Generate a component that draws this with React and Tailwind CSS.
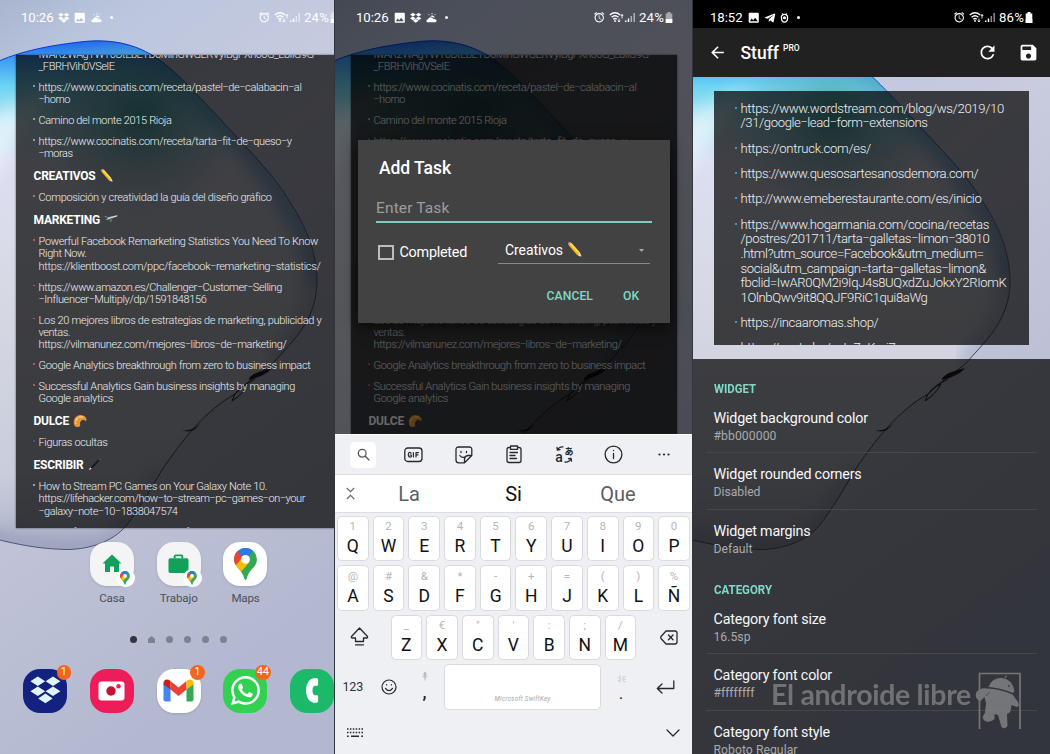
import React, { useLayoutEffect, useRef, useState } from "react";
import { MdAlarm, MdImage, MdRefresh, MdSave, MdArrowBack } from "react-icons/md";
import { FaDropbox, FaTelegramPlane, FaWhatsapp } from "react-icons/fa";

/* One line of text whose tracking (or horizontal scale) is set to fill a given width. */
function Fit({ w, scale = false, className = "", children }) {
  const ref = useRef(null);
  const [style, setStyle] = useState({});
  useLayoutEffect(() => {
    const natural = ref.current.getBoundingClientRect().width;
    if (scale) setStyle({ transform: `scaleX(${w / natural})` });
    else setStyle({ letterSpacing: `${(w - natural) / String(children).length}px` });
  }, []);
  const parts = String(children).split("–");
  return (
    <span ref={ref} style={style} className={`inline-block origin-left whitespace-pre ${className}`}>
      {parts.map((p, i) => (
        <React.Fragment key={i}>
          {i > 0 && <span className="align-[0.06em] text-[0.84em] leading-none">–</span>}
          {p}
        </React.Fragment>
      ))}
    </span>
  );
}

function Wallpaper() {
  const blob =
    "M-30 78 C0 54 45 46 80 42 C112 38 135 45 152 55 C175 69 200 98 222 121 C248 150 272 172 290 202 C308 230 317 255 317 282 C316 318 298 336 272 364 C258 376 246 382 235 394 C206 410 182 440 162 470 C150 490 140 508 126 526 C112 542 90 549 68 549.500 C40 549 15 545 -30 532 Z";
  return (
    <svg className="absolute left-0 top-0" width="358" height="754" viewBox="0 0 358 754" preserveAspectRatio="none">
      <defs>
        <linearGradient id="sky" x1="0" y1="0" x2="0.35" y2="1">
          <stop offset="0" stopColor="#a9b4cf" />
          <stop offset="0.12" stopColor="#bbc6de" />
          <stop offset="0.4" stopColor="#c9cbde" />
          <stop offset="0.75" stopColor="#bcc0d5" />
          <stop offset="1" stopColor="#b2b8d0" />
        </linearGradient>
        <linearGradient id="glass" x1="0" y1="40" x2="0" y2="550" gradientUnits="userSpaceOnUse">
          <stop offset="0" stopColor="#1f62e6" />
          <stop offset="0.035" stopColor="#3a9af2" />
          <stop offset="0.09" stopColor="#6cd4f2" />
          <stop offset="0.17" stopColor="#b8e4f2" />
          <stop offset="0.24" stopColor="#dddff2" />
          <stop offset="0.5" stopColor="#d6d9e3" />
          <stop offset="0.85" stopColor="#c9cddc" />
          <stop offset="1" stopColor="#adb3ca" />
        </linearGradient>
        <radialGradient id="teal" cx="140" cy="118" r="100" gradientUnits="userSpaceOnUse">
          <stop offset="0" stopColor="#3a9c98" stopOpacity="0.85" />
          <stop offset="0.5" stopColor="#5fb0b8" stopOpacity="0.45" />
          <stop offset="1" stopColor="#5fb0c0" stopOpacity="0" />
        </radialGradient>
        <linearGradient id="rim" x1="0" y1="40" x2="0" y2="550" gradientUnits="userSpaceOnUse">
          <stop offset="0" stopColor="#0b2fd8" />
          <stop offset="0.1" stopColor="#1b57b8" />
          <stop offset="0.4" stopColor="#5a6480" />
          <stop offset="0.7" stopColor="#33363f" />
          <stop offset="1" stopColor="#4b5478" />
        </linearGradient>
        <filter id="soft" x="-20%" y="-20%" width="140%" height="140%">
          <feGaussianBlur stdDeviation="9" />
        </filter>
        <clipPath id="inside">
          <path d={blob} />
        </clipPath>
      </defs>
      <rect width="358" height="754" fill="url(#sky)" />
      <path d={blob} fill="url(#glass)" />
      <g clipPath="url(#inside)">
        <path d="M152 55 C175 69 200 98 222 121 C272 172 317 235 317 282" fill="none" stroke="#2f78b8" strokeWidth="18" opacity="0.55" filter="url(#soft)" />
        <circle cx="140" cy="130" r="110" fill="url(#teal)" />
        <path d="M-20 120 L90 74 L60 84 L-20 190 Z" fill="#f2fbff" opacity="0.6" filter="url(#soft)" />
        <path d="M317 262 C316 318 298 336 272 364" fill="none" stroke="#6a70a8" strokeWidth="16" opacity="0.4" filter="url(#soft)" />
        <path d="M162 470 C140 508 126 526 112 540 C90 549 40 549 -20 535" fill="none" stroke="#666e90" strokeWidth="10" opacity="0.5" filter="url(#soft)" />
      </g>
      <path d={blob} fill="none" stroke="url(#rim)" strokeWidth="1" />
      <path d="M272 368 Q260 371 254 374 Q248 378 249 380 Q261 377 268 372 Z" fill="#14161a" />
      <path d="M248 384 Q236 388 232 401 Q243 394 248 384 M255 379 Q244 384 236 393" fill="none" stroke="#14161a" strokeWidth="1" />
      <path d="M181 430 Q191 432 200 424 Q194 432 187 431.500 Z" fill="#202329" />
    </svg>
  );
}

function Pencil({ size = 14 }) {
  return (
    <svg width={size} height={size} viewBox="0 0 14 14">
      <path d="M1.300 2.600 L3.600 .6 L11.300 9.200 L8.800 11.300 Z" fill="#f5b81f" />
      <path d="M2.400 1.700 L3.600 .6 L11.300 9.200 L10.300 10 Z" fill="#ffd95a" />
      <path d="M1.300 2.600 L3.600 .6 L2.600 .1 Q1 .3 .8 1.700 Z" fill="#f08aa0" />
      <path d="M8.800 11.300 L11.300 9.200 L13.200 13.300 Z" fill="#f3d9ae" />
      <path d="M11.900 12.500 L12.600 12 L13.200 13.300 Z" fill="#222" />
    </svg>
  );
}
function Airplane() {
  return (
    <svg width="14" height="11" viewBox="0 0 14 11">
      <path d="M3 4.800 L5.500 3 L13 1.200 Q14 1.400 13.200 2.400 L6 4.800 L3.500 5.800 Z" fill="#cfd9df" />
      <path d="M5.500 4.800 L8.500 3.800 L7.500 8 L6 8.500 Z" fill="#5b6b76" />
      <path d="M4.500 3.800 L.5 3 L.8 2.200 L5.500 3.200 Z" fill="#8fa3b0" />
      <path d="M1 5.200 L3.500 5 L3.300 5.800 Z" fill="#b9c7cf" />
    </svg>
  );
}
function Croissant() {
  return (
    <svg width="14" height="14" viewBox="0 0 14 14">
      <path d="M1.500 11.500 Q-.8 5.500 4 2 Q8.500 -.6 12.500 3 Q14 5 13 7.500 Q11 4.800 8.500 6.500 Q6.200 8 7.300 11 Q7 13.500 4.500 13 Q2.500 13 1.500 11.500Z" fill="#e9973a" />
      <path d="M3 10 Q1.500 6 5.500 3.500 Q8 2 10.500 3.400" fill="none" stroke="#f8c878" strokeWidth="1.600" />
      <path d="M4.500 2.500 L6.500 5.500 M1.200 7.500 L4.500 8.500" stroke="#c8752c" strokeWidth=".5" />
    </svg>
  );
}
function Pen() {
  return (
    <svg width="13" height="13" viewBox="0 0 13 13">
      <path d="M2.500 9.500 L10.500 1.200 Q12 .6 12 2 L4 10.800 Z" fill="#15171a" />
      <path d="M11 .8 L12.200 1.900" stroke="#8b9299" strokeWidth=".8" />
      <path d="M.8 12.200 L2.200 9.600 L3.600 10.800 Z" fill="#e4e8ea" />
    </svg>
  );
}

const emojis = { pencil: <Pencil />, plane: <Airplane />, croissant: <Croissant />, pen: <Pen /> };

const tasks = [
  { c: "bg-transparent", l: [["IwAR2WAgYWY6DtEbETD6MihGWGERVyIBgPXh06G_E8IlG9G", 275], ["_FBRHVih0VSelE", 76]] },
  { c: "bg-[#7d9aa0]", l: [["https://www.cocinatis.com/receta/pastel–de–calabacin–al", 263], ["–horno", 31.5]] },
  { c: "bg-[#8aa39c]", l: [["Camino del monte 2015 Rioja", 133]] },
  { c: "bg-[#8a9ba3]", l: [["https://www.cocinatis.com/receta/tarta–fit–de–queso–y", 253], ["–moras", 34]] },
  { h: "CREATIVOS", w: 62, e: "pencil" },
  { c: "bg-[#9a8352]", l: [["Composición y creatividad la guía del diseño gráfico", 233]] },
  { h: "MARKETING", w: 66.500, e: "plane" },
  { c: "bg-[#c0505c]", l: [["Powerful Facebook Remarketing Statistics You Need To Know", 279.5], ["Right Now.", 48], ["https://klientboost.com/ppc/facebook–remarketing–statistics/", 282]] },
  { c: "bg-[#c0505c]", l: [["https://www.amazon.es/Challenger–Customer–Selling", 243.5], ["–Influencer–Multiply/dp/1591848156", 168]] },
  { c: "bg-[#c0505c]", l: [["Los 20 mejores libros de estrategias de marketing, publicidad y", 283], ["ventas.", 31.5], ["https://vilmanunez.com/mejores–libros–de–marketing/", 248]] },
  { c: "bg-[#c0505c]", l: [["Google Analytics breakthrough from zero to business impact", 272]] },
  { c: "bg-[#c0505c]", l: [["Successful Analytics Gain business insights by managing", 256.5], ["Google analytics", 74.5]] },
  { h: "DULCE", w: 35.500, e: "croissant" },
  { c: "bg-[#4a4ca0]", l: [["Figuras ocultas", 69]] },
  { h: "ESCRIBIR", w: 50, e: "pen" },
  { c: "bg-[#9aa0b8]", l: [["How to Stream PC Games on Your Galaxy Note 10.", 228.5], ["https://lifehacker.com/how–to–stream–pc–games–on–your", 266.5], ["–galaxy–note–10–1838047574", 139]] },
  { c: "bg-transparent", l: [["https://lifehacker.com/your–xbox–files–to", 178]] },
];

/* `behindDialog` leaves out the rows that the open dialog and the keyboard cover. */
function TaskWidget({ behindDialog = false }) {
  const list = behindDialog ? tasks.slice(0, 13) : tasks;
  return (
    <div className="relative ml-4 mt-[19px] h-[473px] w-[326px] shrink-0 overflow-hidden bg-[#050606]/[.735] shadow-[0_0_2px_rgba(0,0,0,.6)]">
      <div className="-mt-[12.5px]">
        {list.map((t, i) => {
          if (behindDialog && i === 4) return <div key={i} className="h-[145.6px]" />;
          if (behindDialog && i > 4 && i < 9) return null;
          return t.h ? (
            <div key={i} className="flex h-[23px] items-center gap-1 pl-[17.5px] pt-[2.5px]">
              <Fit w={t.w} className="text-[12px] font-bold leading-none text-white">{t.h}</Fit>
              {emojis[t.e]}
            </div>
          ) : (
            <div key={i} className="flex py-[4.4px] pl-[17px]">
              <span className={`mr-[4px] mt-[5px] h-[1.5px] w-[1.5px] shrink-0 ${t.c}`} />
              <div className="flex flex-col">
                {t.l.map(([s, w]) => (
                  <div key={s} className="h-[12.2px] leading-[12.2px]">
                    <Fit w={w} className="text-[11px] font-light text-[#eeeff1]">{s}</Fit>
                  </div>
                ))}
              </div>
            </div>
          );
        })}
      </div>
    </div>
  );
}

function WifiSignal() {
  return (
    <svg width="27" height="12" viewBox="0 0 27 12" fill="none" stroke="currentColor">
      <path d="M.8 4 Q6 -.6 11.200 4 M2.600 6.200 Q6 3.200 9.400 6.200 M4.300 8.200 Q6 6.800 7.700 8.200" strokeWidth="1.300" />
      <circle cx="6" cy="10" r=".9" fill="currentColor" stroke="none" />
      <path d="M10 11 V7.500 M8.800 9.500 L10 11 L11.200 9.500 M13 3.500 V7.500 M11.800 5 L13 3.500 L14.200 5" strokeWidth=".9" />
      <path d="M16.700 11 V9.500 M19.500 11 V7.500" strokeWidth="1.500" />
      <path d="M22.300 11 V5 M25.200 11 V2" strokeWidth="1.500" opacity=".55" />
    </svg>
  );
}
function Weather() {
  return (
    <svg width="11" height="11" viewBox="0 0 11 11" fill="currentColor">
      <path d="M1 10.200 Q-.4 8 2 7.300 Q3.200 4.600 5.800 5.600 Q7 6 7.300 7 Q10.500 6.400 10.600 8.800 Q10.500 10 9.500 10.200 Z" />
      <path d="M4.200 4.500 Q6 2.700 8 4.300 Q8.700 5 8.500 6 Q6.500 4.200 4.200 4.500Z" />
      <path d="M6 1 V2.300 M2.600 2.200 L3.500 3.200 M9.300 2.200 L8.500 3.100" stroke="currentColor" strokeWidth=".9" />
    </svg>
  );
}
function Bug() {
  return (
    <svg width="9" height="11" viewBox="0 0 9 11" fill="none" stroke="currentColor" strokeWidth="1.300">
      <path d="M2.200 1.500 L3 2.500 M6.800 1.500 L6 2.500 M1.500 4 Q4.500 .8 7.500 4 V7 Q7 10.200 4.500 10.200 Q2 10.200 1.500 7 Z" />
      <circle cx="4.500" cy="5.800" r=".9" fill="currentColor" />
    </svg>
  );
}

function StatusBar({ time, icons, pct, level, pl = "pl-[21px]", right = "pl-[76px]" }) {
  return (
    <div className="relative flex h-[35px] shrink-0 items-center text-white">
      <div className={`flex w-[182px] items-center ${pl}`}>
        <Fit w={32.500} className="text-[13.2px] leading-none">{time}</Fit>
        <div className="ml-[4px] flex items-center gap-[4px]">{icons}</div>
        <span className="ml-[8px] h-[3px] w-[3px] rounded-full bg-white" />
      </div>
      <div className={`flex items-center ${right}`}>
        <MdAlarm size={12.5} className="shrink-0" />
        <span className="ml-[3px] shrink-0"><WifiSignal /></span>
        <Fit w={25} className="ml-[3.5px] text-[13.2px] leading-none">{pct}</Fit>
        <svg className="ml-px shrink-0" width="8" height="11" viewBox="0 0 8 11" fill="#fff">
          <path d="M2.500 0 H5.500 V1.500 H7.300 V11 H.7 V1.500 H2.500 Z" opacity={level < 50 ? 0.5 : 1} />
          <path d="M.7 7 H7.300 V11 H.7 Z" />
        </svg>
      </div>
    </div>
  );
}

function Pin({ w, h }) {
  return (
    <svg width={w} height={h} viewBox="0 0 24 34">
      <defs>
        <clipPath id="pinshape">
          <path d="M12 0 A12 12 0 0 1 24 12 C24 20 15.500 22 13.300 32 Q12 35 10.700 32 C8.500 22 0 20 0 12 A12 12 0 0 1 12 0 Z" />
        </clipPath>
      </defs>
      <g clipPath="url(#pinshape)">
        <rect width="24" height="34" fill="#34a853" />
        <path d="M0 18 L8 9 L16 15 L5.500 27 Z" fill="#fbbc04" />
        <path d="M-2 -2 L5 2.500 L10 8 L2 18 L-2 18 Z" fill="#ea4335" />
        <path d="M3.500 3.800 L12 12 L21 2 L12 -3 Z" fill="#2f78e8" />
      </g>
      <circle cx="12" cy="12" r="4.600" fill="#fff" />
    </svg>
  );
}

const tile = "relative flex h-11 w-11 items-center justify-center rounded-[17px]";
function Badge({ children }) {
  return (
    <span className="absolute -right-[4px] -top-[3.5px] flex h-[14.5px] min-w-[14.5px] items-center justify-center rounded-full bg-[#f2661f] px-[2.5px] text-[10.5px] leading-none text-white">
      {children}
    </span>
  );
}

function HomeShortcuts() {
  const mini = (
    <span className="absolute -bottom-[1px] -right-[1px] flex h-[18px] w-[19px] items-center justify-center rounded-full bg-white">
      <Pin w={10} h={14} />
    </span>
  );
  const items = [
    ["Casa", 25.500, <div key="a" className={`${tile} bg-[#f4f4f4] shadow-sm`}>
      <svg className="-mt-[1px]" width="20" height="19" viewBox="0 0 20 19"><path d="M10 .5 L19.500 9.500 H17 V18 H12 V12.500 H8 V18 H3 V9.500 H.5 Z" fill="#12a05a" /></svg>{mini}</div>],
    ["Trabajo", 38, <div key="b" className={`${tile} bg-[#f4f4f4] shadow-sm`}>
      <svg className="-mt-[1px]" width="21" height="20" viewBox="0 0 22 20"><path d="M7 4 V1.800 Q7 1 8 1 H14 Q15 1 15 1.800 V4" fill="none" stroke="#12a05a" strokeWidth="2" /><rect x=".5" y="4" width="21" height="15.500" rx="1.800" fill="#12a05a" /></svg>{mini}</div>],
    ["Maps", 28, <div key="c" className={`${tile} bg-white shadow-sm`}><Pin w={23} h={32.5} /></div>],
  ];
  return (
    <div className="relative ml-[78.5px] mt-[14px] flex">
      {items.map(([name, w, icon]) => (
        <div key={name} className="flex w-[66.8px] flex-col items-center">
          {icon}
          <Fit w={w} className="mt-[5.5px] text-[11.6px] leading-[13px] text-[#4c4f5a]">{name}</Fit>
        </div>
      ))}
    </div>
  );
}

function Dock() {
  return (
    <div className="relative ml-[23px] mt-[26px] flex gap-[22.8px]">
      <div className={`${tile} shrink-0 bg-[#12227e]`}>
        <svg width="33" height="29" viewBox="0 0 33 29" fill="#dff4fb">
          <path d="M8.800 .5 L16.200 5.200 L8.800 9.900 L1.400 5.200 Z M24 .5 L31.400 5.200 L24 9.900 L16.600 5.200 Z M8.800 10.600 L16.200 15.300 L8.800 20 L1.400 15.300 Z M24 10.600 L31.400 15.300 L24 20 L16.600 15.300 Z M16.400 17.600 L23.600 22.400 L16.400 27.200 L9.200 22.400 Z" />
        </svg>
        <Badge>1</Badge>
      </div>
      <div className={`${tile} shrink-0 bg-[#ec1d59]`}>
        <svg width="27" height="20" viewBox="0 0 27 20"><rect x=".5" y=".5" width="26" height="19" rx="3" fill="#fff" /><circle cx="13" cy="10" r="4.700" fill="#cb1033" /><circle cx="20.500" cy="5.300" r="2.200" fill="#ec1d59" /></svg>
      </div>
      <div className={`${tile} shrink-0 bg-white shadow-sm`}>
        <svg width="31" height="23" viewBox="0 0 31 23">
          <path d="M.5 5 L7.500 9 V22.500 H2.500 Q.5 22.500 .5 20.500 Z" fill="#4285f4" />
          <path d="M30.500 5 L23.500 9 V22.500 H28.500 Q30.500 22.500 30.500 20.500 Z" fill="#34a853" />
          <path d="M7.500 2 L15.500 8.500 L23.500 2 V10.500 L15.500 17 L7.500 10.500 Z" fill="#ea4335" />
          <path d="M.5 4 C.5 .5 4.500 -.5 7.500 2 V10.500 L.5 5.500 Z" fill="#c5221f" />
          <path d="M30.500 4 C30.500 .5 26.500 -.5 23.500 2 V10.500 L30.500 5.500 Z" fill="#fbbc04" />
        </svg>
        <Badge>1</Badge>
      </div>
      <div className={`${tile} shrink-0 bg-[#32d152]`}>
        <FaWhatsapp size={33} color="#fff" />
        <Badge>44</Badge>
      </div>
      <div className={`${tile} shrink-0 bg-[#1cb96b]`}>
        <svg width="15" height="25" viewBox="0 0 16 26"><path d="M12.500 0 H9 Q1.500 1.500 1 13 Q1.500 24.500 9 26 H12.500 Q14 26 14 24.500 V19.500 Q14 18 12.500 18 H10 Q8 17 8 13 Q8 9 10 8 H12.500 Q14 8 14 6.500 V1.500 Q14 0 12.500 0 Z" fill="#fff" /></svg>
      </div>
    </div>
  );
}

function HomePhone() {
  return (
    <section className="relative h-[754px] w-[334px] shrink-0 overflow-hidden bg-[#bcc2da]">
      <Wallpaper />
      <div className="relative flex w-[358px] flex-col">
        <StatusBar time="10:26" pct="24%" level={24} icons={<><FaDropbox size={11.5} /><MdImage size={13.5} /><Weather /></>} />
        <div className="h-px" />
        <TaskWidget />
        <HomeShortcuts />
        <div className="ml-[130px] mt-[31px] flex items-center gap-[11px]">
          <span className="h-[7px] w-[7px] rounded-full bg-[#32343d]" />
          <svg width="7" height="7" viewBox="0 0 7 7" fill="#7d8292"><path d="M3.500 0 L7 3 V7 H0 V3 Z" /></svg>
          {[0, 1, 2, 3].map((i) => <span key={i} className="h-[7px] w-[7px] rounded-full bg-[#7d8292]" />)}
        </div>
        <Dock />
      </div>
    </section>
  );
}

function Dialog() {
  return (
    <div className="absolute left-[23px] top-[139.5px] h-[183.5px] w-[311.5px] bg-[#424242] shadow-[0_4px_14px_rgba(0,0,0,.6)]">
      <div className="pl-[21px] pt-[18px] leading-[20px]"><Fit w={72} className="text-[17.5px] font-medium text-white">Add Task</Fit></div>
      <div className="ml-[18px] mt-[18.500px] h-[26px] w-[276px] border-b-2 border-[#80cbc4] leading-[22px]">
        <Fit w={73.500} className="text-[15.5px] text-[#9d9d9d]">Enter Task</Fit>
      </div>
      <div className="flex">
        <div className="flex w-[140px] items-center gap-[6px] pl-5 pt-[18px]">
          <span className="h-[15.5px] w-[15.5px] border-2 border-[#bdbdbd]" />
          <Fit w={67.500} className="pt-[2px] text-[14.4px] leading-[20px] text-white">Completed</Fit>
        </div>
        <div className="mt-[15.500px] flex h-[25px] w-[152px] items-center border-b border-[#8a8a8a] pb-[1px] pl-[7px]">
          <Fit w={58} className="text-[14px] leading-[20px] text-white">Creativos</Fit>
          <span className="ml-[4px]"><Pencil size={16} /></span>
          <svg className="ml-auto mr-[6px]" width="5" height="3" viewBox="0 0 5 3"><path d="M0 0 H5 L2.500 3 Z" fill="#aaa" /></svg>
        </div>
      </div>
      <div className="mt-[21.500px] flex gap-[30px] pl-[188.5px] leading-[22px]">
        <Fit w={46.500} className="text-[12.2px] font-medium text-[#7fdbc4]">CANCEL</Fit>
        <Fit w={16.500} className="text-[12.2px] font-medium text-[#7fdbc4]">OK</Fit>
      </div>
    </div>
  );
}

const keyCls = "flex h-[45.5px] w-[31.7px] shrink-0 flex-col items-center rounded-[4.5px] border border-[#d9dadf] bg-white";
function Key({ sub, k }) {
  return (
    <div className={keyCls}>
      <span className="mt-[2.5px] h-[16px] text-[11.5px] leading-[15px] text-[#b4b5b9]">{sub}</span>
      <span className="text-[17.500px] leading-[22px] text-[#111]">{k}</span>
    </div>
  );
}
const rows = ["1Q 2W 3E 4R 5T 6Y 7U 8I 9O 0P", "@A #S &D *F -G +H =J (K )L %Ñ", "_Z €X \"C 'V :B ;N /M"].map((r) => r.split(" "));

function Keyboard() {
  const s = { fill: "none", stroke: "#26282c", strokeWidth: 1.3, strokeLinecap: "round", strokeLinejoin: "round" };
  return (
    <div className="absolute left-0 top-[434px] h-80 w-full bg-[#eff0f4]">
      <div className="flex h-10 items-center border-t border-white pl-[15px]">
        <div className="flex h-[26px] w-[26px] items-center justify-center rounded-[5px] bg-white">
          <svg width="13" height="13" viewBox="0 0 13 13" {...s} stroke="#505257" strokeWidth="1.200"><circle cx="5.200" cy="5.200" r="3.900" /><path d="M8 8 L12 12" /></svg>
        </div>
        <div className="ml-[12.500px] flex w-[50px] justify-center">
          <svg width="19" height="16" viewBox="0 0 19 16" {...s}>
            <rect x=".8" y="1" width="17.200" height="13.500" rx="3" />
            <path d="M7.200 6.200 Q4.500 4.200 4.300 7.700 Q4.500 11 7.300 9.700 V8 H6 M9.400 5.600 V10 M12 10 V5.600 H14.400 M12 7.800 H14" strokeWidth="1.200" />
          </svg>
        </div>
        <div className="flex w-[50px] justify-center">
          <svg width="18" height="18" viewBox="0 0 18 18" {...s}><path d="M16.800 9.500 V3.500 Q16.800 1 14.200 1 H3.600 Q1 1 1 3.600 V14 Q1 16.800 3.600 16.800 H9.500 L16.800 9.500 H13 Q9.800 9.800 9.500 13 V16.800 M6 5.500 V6.500 M11.500 5.500 V6.500 M4.800 9.500 Q6.500 12 9.500 11.200" /></svg>
        </div>
        <div className="flex w-[50px] justify-center">
          <svg width="16" height="19" viewBox="0 0 16 19" {...s}><path d="M4.500 2.500 H3 Q1 2.500 1 4.500 V15.500 Q1 17.500 3 17.500 H13 Q15 17.500 15 15.500 V4.500 Q15 2.500 13 2.500 H11.500 M4.500 1 H11.500 V4.300 H4.500 Z M4 7.500 H11.500 M4 10.500 H9 M4 13.500 H10.500" /></svg>
        </div>
        <div className="flex w-[50px] items-end justify-center text-[#26282c]">
          <span className="flex flex-col items-center">
            <svg className="ml-[3px]" width="8" height="5" viewBox="0 0 8 5" {...s}><path d="M7 .8 Q3 .5 1.500 4 M1 1.500 L1.400 4.200 L4 3.700" /></svg>
            <span className="text-[14px] font-medium leading-[12px]">a</span>
          </span>
          <span className="flex flex-col">
            <span className="mb-[1px] text-[9px] font-bold leading-[9px] [font-family:'Noto_Sans_CJK_JP',sans-serif]">あ</span>
            <svg width="9" height="6" viewBox="0 0 9 6" {...s}><path d="M1 5 Q5 5.500 7 1.500 M4.500 1.700 L7 1.500 L7.500 4" /></svg>
          </span>
        </div>
        <div className="flex w-[50px] justify-center">
          <svg width="19" height="19" viewBox="0 0 19 19" {...s}><circle cx="9.500" cy="9.500" r="8.400" /><path d="M9.500 8.500 V13.500 M9.500 5.300 V5.600" /></svg>
        </div>
        <div className="flex w-[50px] justify-center pl-px">
          <svg width="12" height="3" viewBox="0 0 12 3" fill="#26282c"><circle cx="1.500" cy="1.500" r="1.100" /><circle cx="6" cy="1.500" r="1.100" /><circle cx="10.500" cy="1.500" r="1.100" /></svg>
        </div>
      </div>
      <div className="flex h-[39px] items-center border-y border-[#dcdde2] bg-white">
        <svg className="ml-[11px]" width="9" height="13" viewBox="0 0 9 13" fill="none" stroke="#666" strokeWidth="1.100"><path d="M.8 1 L4.500 4.700 L8.200 1 M.8 12 L4.500 8.300 L8.200 12" /></svg>
        <div className="flex w-[312px] text-[20px] leading-none text-[#5c5d62]">
          <span className="w-[104px] pl-1 text-center">La</span>
          <span className="w-[106px] pl-[3px] text-center text-[#111]">Si</span>
          <span className="w-[102px] pl-[4px] text-center">Que</span>
        </div>
      </div>
      <div className="flex flex-col gap-[4.1px] pt-[2.5px]">
        <div className="flex gap-1 pl-[2px]">{rows[0].map((x) => <Key key={x} sub={x[0]} k={x[1]} />)}</div>
        <div className="flex gap-1 pl-[2px]">{rows[1].map((x) => <Key key={x} sub={x[0]} k={x[1]} />)}</div>
        <div className="flex items-center gap-1 pl-[14.5px]">
          <svg className="mr-[18px]" width="19" height="20" viewBox="0 0 19 20" {...s}><path d="M9.500 1 L17.500 9.500 Q18 11 16.500 11 H13.500 V14.500 H5.500 V11 H2.500 Q1 11 1.500 9.500 Z M5.500 17.800 H13.500" /></svg>
          {rows[2].map((x) => <Key key={x} sub={x[0]} k={x[1]} />)}
          <svg className="ml-[19.5px]" width="18" height="15" viewBox="0 0 18 15" {...s}><path d="M6 1 H15 Q17 1 17 3 V12 Q17 14 15 14 H6 L1 8.500 Q.5 7.500 1 6.500 Z M8.500 5 L13 9.800 M13 5 L8.500 9.800" /></svg>
        </div>
        <div className="flex items-center pl-[7.5px]">
          <Fit w={20.500} className="text-[12.5px] text-[#303136]">123</Fit>
          <svg className="ml-[17.500px]" width="16" height="16" viewBox="0 0 16 16" {...s} strokeWidth="1.200"><circle cx="8" cy="8" r="7" /><path d="M4.500 9.300 Q8 14 11.500 9.300 M5.600 5.500 V6 M10.400 5.500 V6" /></svg>
          <div className="ml-[16px] flex h-[45px] w-[24px] flex-col items-center">
            <svg className="mt-[7px]" width="6" height="9" viewBox="0 0 6 9" fill="none" stroke="#b9babe"><rect x="2" y=".5" width="2" height="4" rx="1" fill="#b9babe" /><path d="M.7 4 Q3 8 5.300 4 M3 6 V8.500" /></svg>
            <span className="mt-[4px] text-[18px] font-medium leading-[14px] text-[#222]">,</span>
          </div>
          <div className="ml-[7.500px] flex h-[45.5px] w-[157px] items-end justify-center rounded-[4.5px] border border-[#d9dadf] bg-white pb-[5px]">
            <Fit w={56} className="text-[6.3px] italic leading-[10px] text-[#a8a8ac]">Microsoft SwiftKey</Fit>
          </div>
          <div className="ml-[8px] flex h-[45px] w-[24px] flex-col items-center">
            <svg className="mt-[10px]" width="9" height="8" viewBox="0 0 9 8" stroke="#c3c4c8" strokeWidth=".9" fill="none"><path d="M3 .5 V7.500 M.5 2 L2 3.500 M.5 6.500 L2 5 M5.500 2.500 L8.500 1.500 M5 4.200 H8.500 M5.500 5.500 L8.500 7" /></svg>
            <span className="mt-[3px] text-[17px] leading-[14px] text-[#222]">.</span>
          </div>
          <svg className="ml-[23px]" width="19" height="15" viewBox="0 0 19 15" {...s}><path d="M17.800 1 V8.500 H1.500 M6 4 L1.300 8.500 L6 13" /></svg>
        </div>
      </div>
      <div className="flex items-center justify-between pl-[12px] pr-[12px] pt-[18.500px]">
        <svg width="16" height="10" viewBox="0 0 16 10" stroke="#26282c" strokeWidth="1.500"><path d="M0 1 H16 M0 4.500 H16" strokeDasharray="1.500 1.400" /><path d="M0 8.200 H1.700 M4 8.200 H12 M14.300 8.200 H16" /></svg>
        <svg width="14" height="8" viewBox="0 0 14 8" {...s}><path d="M1 1 L7 7 L13 1" /></svg>
      </div>
    </div>
  );
}

function DialogPhone() {
  return (
    <section className="relative ml-px h-[754px] w-[357px] shrink-0 overflow-hidden">
      <Wallpaper />
      <div className="relative h-[434px] overflow-hidden">
        <div className="h-9" />
        <TaskWidget behindDialog />
        <div className="absolute inset-0 bg-black/60" />
      </div>
      <div className="absolute inset-x-0 top-0">
        <StatusBar time="10:26" pct="24%" level={24} icons={<><MdImage size={13.5} /><FaDropbox size={11.5} /><Weather /></>} />
      </div>
      <Dialog />
      <Keyboard />
    </section>
  );
}

const preview = [
  [["https://www.wordstream.com/blog/ws/2019/10", 263.5], ["/31/google–lead–form–extensions", 187]],
  [["https://ontruck.com/es/", 130.5]],
  [["https://www.quesosartesanosdemora.com/", 238]],
  [["http://www.emeberestaurante.com/es/inicio", 241]],
  [["https://www.hogarmania.com/cocina/recetas", 248.5], ["/postres/201711/tarta–galletas–limon–38010", 249], [".html?utm_source=Facebook&utm_medium=", 243], ["social&utm_campaign=tarta–galletas–limon&", 245.5], ["fbclid=IwAR0QM2i9IqJ4s8UQxdZuJokxY2RIomK", 266], ["1OlnbQwv9it8QQJF9RiC1qui8aWg", 187]],
  [["https://incaaromas.shop/", 138]],
  [["https://pasto.be/sate7uKuri7", 155]],
];

function Setting({ title, w, value, vw, last }) {
  return (
    <div className={`mx-[13px] h-[56.6px] shrink-0 pl-[7.500px] pt-[12px] ${last ? "" : "border-b border-[#47474b]"}`}>
      <div className="h-[17px] leading-[18px]"><Fit w={w} className="text-[14.3px] text-[#f7f7f7]">{title}</Fit></div>
      <div className="h-[17px] leading-[17px]"><Fit w={vw} className="text-[12.2px] text-[#a9aaad]">{value}</Fit></div>
    </div>
  );
}

function Watermark() {
  return (
    <div className="absolute left-[78px] top-[672px] flex text-[#808184]">
      <Fit w={200} className="mt-[6px] text-[28.500px] font-bold leading-[32px] opacity-80 [font-family:Lato,sans-serif]">El androide libre</Fit>
      <svg className="ml-[3px]" width="50" height="58" viewBox="0 0 50 58" fill="#808184" opacity=".85">
        <path d="M5.500 57 V1.500 H46 V57" fill="none" stroke="#808184" strokeWidth="1.700" />
        <path d="M14.500 15 Q18 5.500 28 6 Q38 7 40.500 19 L39 21 Q27 16 14.500 15 Z" />
        <path d="M31 6 L32.500 3.500" stroke="#808184" strokeWidth="1.200" />
        <path d="M13 16.500 Q26 17 38.500 22.500 L44 30 Q46 34 43 35 L37.500 33 L36.500 39 Q35 42 33 42 L33.500 54 Q31 58 27.500 55 L24 43 L20.500 42 V47 Q16 51 11 49 Q6.500 45.500 11 41 L12 31 L10.500 25 L6 29.500 Q0 26 2.500 20 Q7 15 13 16.500 Z" />
        <circle cx="35" cy="14" r=".9" fill="#38393d" />
        <path d="M12 24 L15 20.500" stroke="#38393d" strokeWidth=".7" />
      </svg>
    </div>
  );
}

function SettingsPhone() {
  return (
    <section className="relative ml-px h-[754px] w-[357px] shrink-0 overflow-hidden">
      <Wallpaper />
      <div className="relative flex h-[754px] flex-col">
        <div className="h-7 shrink-0 bg-black">
          <StatusBar time="18:52" pct="86%" level={86} pl="pl-[17px]" right="pl-[78px]" icons={<><MdImage size={13.5} /><FaTelegramPlane size={12} /><Bug /></>} />
        </div>
        <div className="relative flex h-[49px] shrink-0 items-center bg-[#212121] pl-[14.5px] text-white">
          <MdArrowBack size={19} />
          <Fit w={38.500} className="ml-[14px] pt-px text-[17.5px] font-medium leading-[20px]">Stuff</Fit>
          <Fit w={16.500} className="-mt-2 ml-[4px] text-[8.500px] font-medium leading-none">PRO</Fit>
          <MdRefresh size={21} className="ml-[177.5px]" />
          <MdSave size={21} className="ml-[20px]" />
        </div>
        <div className="h-[282px] shrink-0 pl-[20.5px] pt-[14px]">
          <div className="h-[254px] w-[315.5px] overflow-hidden bg-[#050606]/[.735] pt-[4.3px]">
            {preview.map((l, i) => (
              <div key={i} className="flex py-[5.35px] pl-[21.5px]">
                <span className="mr-[4px] mt-[6px] h-[2px] w-[1.5px] shrink-0 bg-[#35a3ab]" />
                <div>
                  {l.map(([s, w]) => (
                    <div key={s} className="h-[14.65px] leading-[14.65px]"><Fit w={w} className="text-[13.1px] font-light text-[#f0f1f3]">{s}</Fit></div>
                  ))}
                </div>
              </div>
            ))}
          </div>
        </div>
        <div className="flex h-[395px] flex-col overflow-hidden bg-[#050606]/[.735]">
          <div className="h-[37.7px] shrink-0 pl-[20.5px] pt-[21px] leading-[16px]"><Fit scale w={42} className="text-[12.7px] font-bold text-[#80d8c6]">WIDGET</Fit></div>
          <Setting title="Widget background color" w={154.500} value="#bb000000" vw={63} />
          <Setting title="Widget rounded corners" w={148} value="Disabled" vw={47} />
          <Setting title="Widget margins" w={97} value="Default" vw={39} last />
          <div className="h-[31.2px] shrink-0 pl-[20.5px] pt-[14.500px] leading-[16px]"><Fit scale w={58} className="text-[12.7px] font-bold text-[#80d8c6]">CATEGORY</Fit></div>
          <Setting title="Category font size" w={112.500} value="16.5sp" vw={37} />
          <Setting title="Category font color" w={118.500} value="#ffffffff" vw={41} />
          <Setting title="Category font style" w={116.500} value="Roboto Regular" vw={84} last />
        </div>
      </div>
      <Watermark />
    </section>
  );
}

export default function App() {
  return (
    <main className="flex h-[754px] w-[1050px] overflow-hidden bg-[#33353c] [font-family:Roboto,sans-serif]">
      <HomePhone />
      <DialogPhone />
      <SettingsPhone />
    </main>
  );
}
